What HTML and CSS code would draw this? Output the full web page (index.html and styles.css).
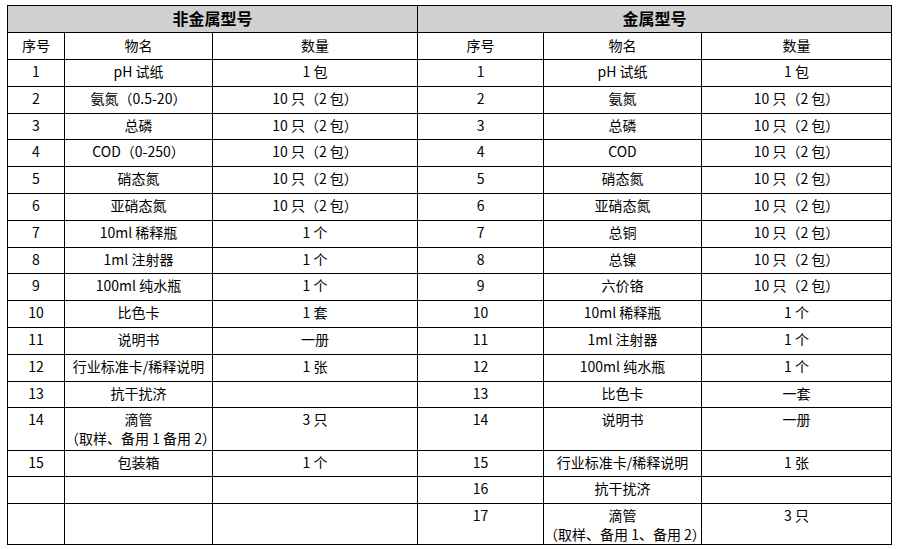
FILE: index.html
```html
<!DOCTYPE html>
<html lang="zh">
<head>
<meta charset="utf-8">
<link rel="stylesheet" href="styles.css">
</head>
<body>
<table class="sheet">
  <colgroup>
    <col class="c-no"><col class="c-name"><col class="c-qty">
    <col class="c-no2"><col class="c-name2"><col class="c-qty2">
  </colgroup>
  <tr class="r-title">
    <th colspan="3">非金属型号</th>
    <th colspan="3">金属型号</th>
  </tr>
  <tr class="r-head">
    <td>序号</td><td>物名</td><td>数量</td>
    <td>序号</td><td>物名</td><td>数量</td>
  </tr>
  <tr><td>1</td><td>pH 试纸</td><td>1 包</td><td>1</td><td>pH 试纸</td><td>1 包</td></tr>
  <tr><td>2</td><td>氨氮（0.5-20）</td><td>10 只（2 包）</td><td>2</td><td>氨氮</td><td>10 只（2 包）</td></tr>
  <tr class="r-short"><td>3</td><td>总磷</td><td>10 只（2 包）</td><td>3</td><td>总磷</td><td>10 只（2 包）</td></tr>
  <tr><td>4</td><td>COD（0-250）</td><td>10 只（2 包）</td><td>4</td><td>COD</td><td>10 只（2 包）</td></tr>
  <tr><td>5</td><td>硝态氮</td><td>10 只（2 包）</td><td>5</td><td>硝态氮</td><td>10 只（2 包）</td></tr>
  <tr><td>6</td><td>亚硝态氮</td><td>10 只（2 包）</td><td>6</td><td>亚硝态氮</td><td>10 只（2 包）</td></tr>
  <tr><td>7</td><td>10ml 稀释瓶</td><td>1 个</td><td>7</td><td>总铜</td><td>10 只（2 包）</td></tr>
  <tr class="r-short"><td>8</td><td>1ml 注射器</td><td>1 个</td><td>8</td><td>总镍</td><td>10 只（2 包）</td></tr>
  <tr><td>9</td><td>100ml 纯水瓶</td><td>1 个</td><td>9</td><td>六价铬</td><td>10 只（2 包）</td></tr>
  <tr><td>10</td><td>比色卡</td><td>1 套</td><td>10</td><td>10ml 稀释瓶</td><td>1 个</td></tr>
  <tr><td>11</td><td>说明书</td><td>一册</td><td>11</td><td>1ml 注射器</td><td>1 个</td></tr>
  <tr><td>12</td><td>行业标准卡/稀释说明</td><td>1 张</td><td>12</td><td>100ml 纯水瓶</td><td>1 个</td></tr>
  <tr class="r-short"><td>13</td><td>抗干扰济</td><td></td><td>13</td><td>比色卡</td><td>一套</td></tr>
  <tr class="r-tall"><td>14</td><td>滴管<br>（取样、备用 1 备用 2）</td><td>3 只</td><td>14</td><td>说明书</td><td>一册</td></tr>
  <tr class="r-short"><td>15</td><td>包装箱</td><td>1 个</td><td>15</td><td>行业标准卡/稀释说明</td><td>1 张</td></tr>
  <tr><td></td><td></td><td></td><td>16</td><td>抗干扰济</td><td></td></tr>
  <tr class="r-last"><td></td><td></td><td></td><td>17</td><td>滴管<br>（取样、备用 1、备用 2）</td><td>3 只</td></tr>
</table>
</body>
</html>
```
FILE: styles.css
```css
html, body {
  margin: 0;
  padding: 0;
  background: #ffffff;
}
body {
  padding: 5px 0 0 7px;
  font-family: "Noto Sans CJK SC", "Noto Sans", sans-serif;
  color: #000;
}
.sheet {
  border-collapse: collapse;
  table-layout: fixed;
  width: 884px;
  font-size: 14px;
  line-height: 19px;
}
.c-no { width: 57px; }
.c-name { width: 148px; }
.c-qty { width: 205px; }
.c-no2 { width: 126px; }
.c-name2 { width: 158px; }
.c-qty2 { width: 190px; }
.sheet tr {
  height: 27px;
}
.sheet tr.r-short {
  height: 26px;
}
.sheet tr.r-tall {
  height: 43px;
}
.sheet tr.r-last {
  height: 41px;
}
.sheet td, .sheet th {
  border: 1px solid #000;
  text-align: center;
  vertical-align: top;
  padding: 2px 0 0 0;
  white-space: nowrap;
}
.r-title th {
  background: #d0d0d0;
  font-size: 16px;
  font-weight: bold;
  padding-top: 3px;
}
.r-head td {
  padding-top: 3px;
}
```
